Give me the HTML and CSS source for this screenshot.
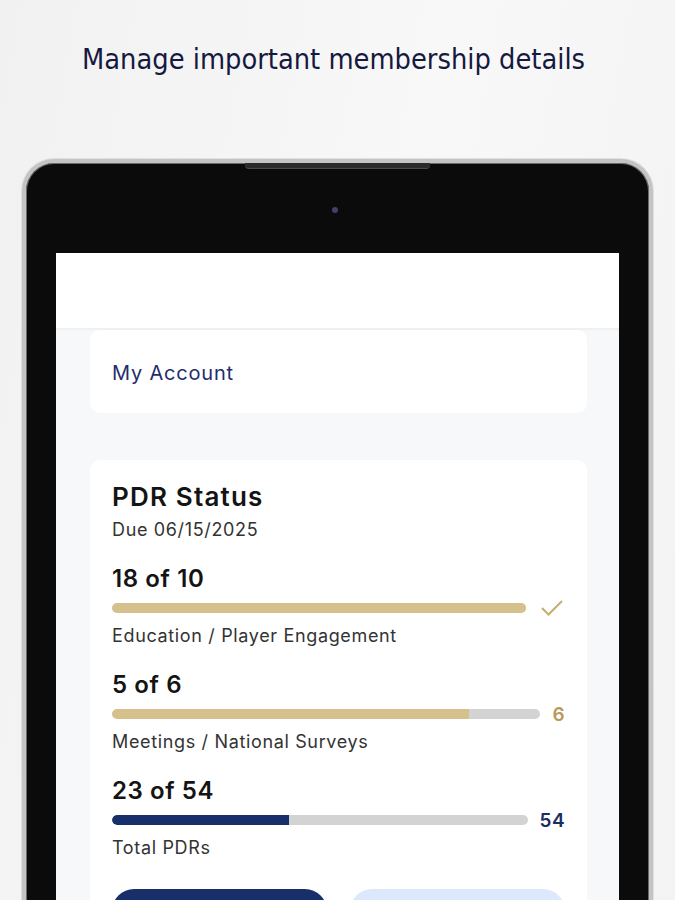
FILE: index.html
```html
<!DOCTYPE html>
<html lang="en">

<head>
    <meta charset="UTF-8">
    <title>Membership</title>
    <link rel="stylesheet" href="styles.css">
</head>

<body>
    <h1 class="headline">Manage important membership details</h1>

    <!-- Tablet frame -->
    <div class="tablet">
        <div class="speaker"></div>
        <div class="camera"></div>

        <div class="screen">
            <div class="app-bar"></div>

            <div class="content">
                <div class="card account-card">
                    <span class="account-link">My Account</span>
                </div>

                <div class="card pdr-card">
                    <h2>PDR Status</h2>
                    <p class="due">Due 06/15/2025</p>

                    <div class="metric">
                        <div class="count">18 of 10</div>
                        <div class="bar-row">
                            <div class="bar short"><div class="fill gold" style="width: 100%"></div></div>
                            <svg class="check" width="24" height="18" viewBox="0 0 24 18">
                                <path d="M2 9 L8.5 15.5 L22 2" fill="none" stroke="#c9ad6e" stroke-width="2" />
                            </svg>
                        </div>
                        <div class="label">Education / Player Engagement</div>
                    </div>

                    <div class="metric">
                        <div class="count">5 of 6</div>
                        <div class="bar-row">
                            <div class="bar"><div class="fill gold" style="width: 83.3%"></div></div>
                            <span class="target gold-text">6</span>
                        </div>
                        <div class="label">Meetings / National Surveys</div>
                    </div>

                    <div class="metric">
                        <div class="count">23 of 54</div>
                        <div class="bar-row">
                            <div class="bar mid"><div class="fill navy" style="width: 42.6%"></div></div>
                            <span class="target navy-text">54</span>
                        </div>
                        <div class="label">Total PDRs</div>
                    </div>

                    <!-- action buttons, labels sit below the fold -->
                    <div class="actions">
                        <button class="btn primary" aria-label="View PDRs"></button>
                        <button class="btn secondary" aria-label="Add PDR"></button>
                    </div>
                </div>
            </div>
        </div>
    </div>
</body>

</html>
```

FILE: styles.css
```css
html,
body {
    margin: 0;
    height: 900px;
    overflow: hidden;
}

body {
    background: linear-gradient(100deg, #f1f1f1 0%, #f8f8f8 55%, #f3f3f3 100%);
    font-family: 'Inter', 'Roboto', sans-serif;
}

.headline {
    margin: 0;
    padding-top: 42px;
    padding-left: 82px;
    height: 121px;
    box-sizing: border-box;
    font-family: 'DejaVu Sans Condensed', 'DejaVu Sans', sans-serif;
    font-stretch: condensed;
    font-weight: normal;
    font-size: 28.7px;
    color: #16193f;
}

/* Device */
.tablet {
    position: relative;
    margin: 38px 0 0 22px;
    width: 631px;
    height: 800px;
    box-sizing: border-box;
    background: #0b0b0b;
    border: 4px solid #c4c4c4;
    border-bottom: none;
    border-radius: 32px 32px 0 0;
    box-shadow: inset 0 0 0 1px #6a6a6a, 0 0 0 1px #e0e0e0;
    padding: 90px 30px 0 30px;
}

.speaker {
    position: absolute;
    top: 0;
    left: 219px;
    width: 185px;
    height: 5px;
    background: #2a2a2a;
    border-radius: 0 0 4px 4px;
    border-bottom: 1px solid #4a4a4a;
}

.camera {
    position: absolute;
    top: 44px;
    left: 306px;
    width: 6px;
    height: 6px;
    border-radius: 50%;
    background: #40406a;
}

.screen {
    background: #f7f8fa;
    height: 100%;
}

.app-bar {
    height: 75px;
    background: #ffffff;
    border-bottom: 2px solid #eef0f2;
}

.content {
    padding: 0 32px 0 34px;
}

.card {
    background: #ffffff;
    border-radius: 10px;
    padding: 0 22px;
}

.account-card {
    height: 83px;
    display: flex;
    align-items: center;
    margin-bottom: 47px;
}

.account-link {
    font-size: 20px;
    color: #1f2d6b;
    letter-spacing: 0.8px;
    padding-top: 2px;
}

.pdr-card {
    padding-top: 22px;
    height: 520px;
}

.pdr-card h2 {
    margin: 0;
    font-size: 26px;
    font-weight: 600;
    color: #141414;
    line-height: 30px;
    letter-spacing: 1.2px;
}

.due {
    margin: 6px 0 0;
    font-size: 18px;
    color: #333333;
    line-height: 24px;
    letter-spacing: 0.65px;
}

.metric {
    margin-top: 20px;
}

.metric + .metric {
    margin-top: 16px;
}

.count {
    font-size: 24px;
    font-weight: 600;
    color: #141414;
    line-height: 34px;
    letter-spacing: 0.6px;
}

.bar-row {
    display: flex;
    align-items: center;
    height: 24px;
    gap: 12px;
}

.bar {
    width: 429px;
    height: 10px;
    border-radius: 5px;
    background: #d3d3d3;
    overflow: hidden;
}

.bar.short {
    width: 414px;
}

.bar.mid {
    width: 416px;
}

.fill {
    height: 100%;
    border-radius: 5px 0 0 5px;
}

.fill.gold {
    background: #d6c18d;
}

.fill.navy {
    background: #17306b;
}

.check {
    margin-left: 2px;
}

.target {
    font-size: 19px;
    font-weight: 600;
    letter-spacing: 0.4px;
}

.gold-text {
    color: #b89a5a;
}

.navy-text {
    color: #1b2d62;
}

.label {
    font-size: 18px;
    color: #333333;
    line-height: 32px;
    letter-spacing: 0.65px;
}

.actions {
    display: flex;
    gap: 23px;
    margin-top: 25px;
}

.btn {
    width: 215px;
    height: 48px;
    border: none;
    border-radius: 22px;
}

.btn.primary {
    background: #182f6a;
}

.btn.secondary {
    background: #dce8fb;
}
```
